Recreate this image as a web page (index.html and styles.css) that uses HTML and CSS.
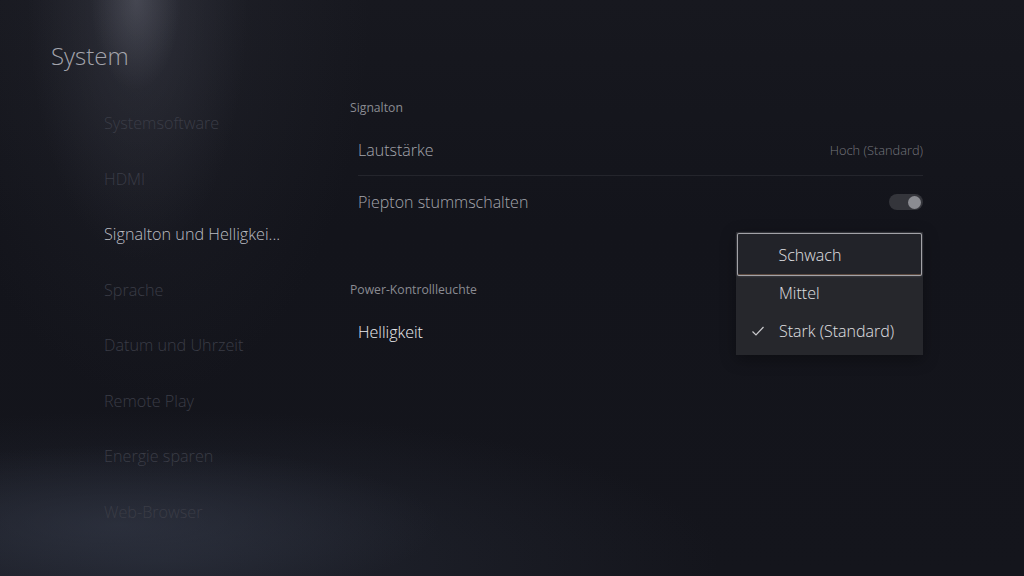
FILE: index.html
```html
<!DOCTYPE html>
<html lang="de">
<head>
<meta charset="utf-8">
<title>System</title>
<link rel="stylesheet" href="styles.css">
</head>
<body>
<div class="screen">
  <header class="title">System</header>
  <div class="main">
    <nav class="menu">
      <div class="menu-item">Systemsoftware</div>
      <div class="menu-item">HDMI</div>
      <div class="menu-item active">Signalton und Helligkei...</div>
      <div class="menu-item">Sprache</div>
      <div class="menu-item">Datum und Uhrzeit</div>
      <div class="menu-item">Remote Play</div>
      <div class="menu-item">Energie sparen</div>
      <div class="menu-item">Web-Browser</div>
    </nav>
    <section class="content">
      <div class="group">
        <div class="group-title">Signalton</div>
        <div class="row divided">
          <span class="row-label">Lautstärke</span>
          <span class="row-value">Hoch (Standard)</span>
        </div>
        <div class="row">
          <span class="row-label">Piepton stummschalten</span>
          <span class="toggle"><span class="knob"></span></span>
        </div>
      </div>
      <div class="group second">
        <div class="group-title">Power-Kontrollleuchte</div>
        <div class="row">
          <span class="row-label bright">Helligkeit</span>
        </div>
      </div>
      <div class="dropdown">
        <div class="option focused"><span class="check"></span>Schwach</div>
        <div class="option"><span class="check"></span>Mittel</div>
        <div class="option"><span class="check"><svg width="14" height="12" viewBox="0 0 14 12"><path d="M1.5 6.5 L5 10 L12.5 2" fill="none" stroke="#c9c9cc" stroke-width="1.2"/></svg></span>Stark (Standard)</div>
      </div>
    </section>
  </div>
</div>
</body>
</html>
```

FILE: styles.css
```css
* { box-sizing: border-box; }
html, body { margin: 0; padding: 0; }
body {
  width: 1024px;
  height: 576px;
  overflow: hidden;
  font-family: "Open Sans", "Noto Sans", sans-serif;
  background: #14151c;
}
.screen {
  width: 1024px;
  height: 576px;
  background:
    radial-gradient(ellipse 45px 90px at 136px 0px, rgba(130,132,145,0.28), rgba(130,132,145,0) 100%),
    radial-gradient(ellipse 110px 260px at 138px 0px, rgba(75,77,90,0.35), rgba(75,77,90,0) 100%),
    radial-gradient(ellipse 220px 400px at 150px 0px, rgba(50,52,62,0.3), rgba(50,52,62,0) 100%),
    radial-gradient(ellipse 320px 80px at 120px 525px, rgba(58,64,80,0.45), rgba(58,64,80,0) 100%),
    radial-gradient(ellipse 560px 150px at 160px 560px, rgba(42,47,60,0.6), rgba(42,47,60,0) 100%),
    linear-gradient(180deg, #17181f 0%, #13141b 40%, #14151c 100%);
  padding-top: 40px;
}
.title {
  margin-left: 51px;
  font-size: 24px;
  line-height: 32px;
  font-weight: 300;
  color: #a3a4ac;
  height: 56px;
}
.main {
  display: flex;
}
.menu {
  width: 350px;
  padding-left: 104px;
}
.menu-item {
  height: 55.5px;
  line-height: 55.5px;
  font-size: 16.2px;
  font-weight: 300;
  color: #3a3c46;
  white-space: nowrap;
}
.menu-item.active { color: #bcbdc3; }
.content {
  position: relative;
  width: 573px;
}
.group-title {
  height: 24px;
  line-height: 24px;
  font-size: 12.2px;
  color: #8a8b92;
  margin-bottom: 4px;
}
.group.second { margin-top: 50px; }
.row {
  height: 52px;
  margin-left: 8px;
  display: flex;
  align-items: center;
  justify-content: space-between;
}
.row.divided { border-bottom: 1px solid #24252c; }
.row-label {
  font-size: 16px;
  font-weight: 300;
  color: #a4a5ac;
}
.row-label.bright { color: #ececf0; }
.row-value {
  font-size: 12.8px;
  font-weight: 300;
  color: #74757c;
}
.toggle {
  width: 34px;
  height: 16px;
  border-radius: 8px;
  background: #34353b;
  display: flex;
  align-items: center;
  justify-content: flex-end;
  padding-right: 2px;
}
.knob {
  width: 13px;
  height: 13px;
  border-radius: 50%;
  background: #8b8c92;
}
.dropdown {
  position: absolute;
  right: 0;
  top: 136px;
  width: 187px;
  background: #26272c;
  padding: 1px 1px 5px;
  box-shadow: 0 4px 14px rgba(0,0,0,0.35);
}
.option {
  height: 38px;
  display: flex;
  align-items: center;
  font-size: 16px;
  font-weight: 300;
  color: #e0e0e4;
  padding-left: 14px;
}
.option.focused {
  height: 43px;
  margin-bottom: -2px;
  border: 1.5px solid rgba(205,205,210,0.75);
  border-radius: 2px;
  box-shadow: inset 0 -1px 0 rgba(200,150,110,0.35), 0 0 3px rgba(200,200,210,0.25);
  background: #222329;
  padding-left: 12.5px;
}
.check {
  width: 28px;
  display: inline-flex;
  align-items: center;
}
```
